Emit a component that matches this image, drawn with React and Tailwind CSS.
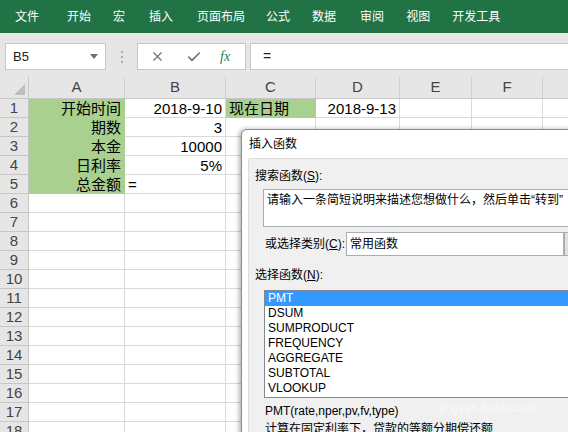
import React from "react";
import { X, Check } from "lucide-react";

const FONT = { fontFamily: '"Liberation Sans", "Noto Sans CJK SC", sans-serif' };

const tabs = [
  ["文件", "ml-[15px]"],
  ["开始", "ml-[28px]"],
  ["宏", "ml-[22px]"],
  ["插入", "ml-[24px]"],
  ["页面布局", "ml-[24px]"],
  ["公式", "ml-[21px]"],
  ["数据", "ml-[22px]"],
  ["审阅", "ml-[24px]"],
  ["视图", "ml-[22px]"],
  ["开发工具", "ml-[22px]"],
];

const colW = ["w-[96px]", "w-[101px]", "w-[90px]", "w-[84px]", "w-[72px]", "w-[71px]", "w-[90px]"];
const letters = ["A", "B", "C", "D", "E", "F", ""];

const data = {
  1: [
    { t: "开始时间", g: true, a: "r" },
    { t: "2018-9-10", a: "r" },
    { t: "现在日期", g: true, a: "l" },
    { t: "2018-9-13", a: "r" },
  ],
  2: [{ t: "期数", g: true, a: "r" }, { t: "3", a: "r" }],
  3: [{ t: "本金", g: true, a: "r" }, { t: "10000", a: "r" }],
  4: [{ t: "日利率", g: true, a: "r" }, { t: "5%", a: "r" }],
  5: [{ t: "总金额", g: true, a: "r" }, { t: "=", a: "l" }],
};

function Cell({ w, c }) {
  const green = c && c.g;
  return (
    <div
      className={
        w +
        " h-[19px] shrink-0 flex items-center border-r border-b " +
        (green ? "bg-[#a9d08e] border-[#a9d08e] " : "bg-white border-[#d9d9d9] ") +
        (c && c.a === "r" ? "justify-end pr-[3px]" : "justify-start pl-[3px]")
      }
    >
      {c ? <span className="text-[15px] leading-none text-black whitespace-nowrap">{c.t}</span> : null}
    </div>
  );
}

function Mn({ pre, k, post }) {
  return (
    <span>
      {pre}(<span className="underline">{k}</span>){post}
    </span>
  );
}

export default function App() {
  const rows = [];
  for (let r = 1; r <= 18; r++) rows.push(r);
  return (
    <div className="relative w-[568px] h-[432px] overflow-hidden bg-[#e6e6e6]" style={FONT}>
      {/* ribbon */}
      <div className="h-[33px] bg-[#217346] flex items-center">
        {tabs.map(([t, m]) => (
          <span key={t} className={m + " text-white text-[12px] leading-none whitespace-nowrap"}>
            {t}
          </span>
        ))}
      </div>

      {/* formula bar */}
      <div className="h-[44px] pt-[10px] flex items-start">
        <div className="ml-[5px] w-[101px] h-[27px] bg-white border border-[#c6c6c6] flex items-center justify-between pl-[7px] pr-[7px]">
          <span className="text-[13px] text-[#222]">B5</span>
          <svg width="8" height="5" viewBox="0 0 8 5">
            <path d="M0 0 L8 0 L4 5 Z" fill="#707070" />
          </svg>
        </div>
        <div className="ml-[15px] w-[2px] h-[27px] flex flex-col items-center justify-center gap-[3px]">
          <div className="w-[2px] h-[2px] bg-[#a8a8a8]" />
          <div className="w-[2px] h-[2px] bg-[#a8a8a8]" />
          <div className="w-[2px] h-[2px] bg-[#a8a8a8]" />
        </div>
        <div className="ml-[14px] w-[109px] h-[27px] bg-white border border-[#c6c6c6] flex items-center">
          <X size={15} strokeWidth={1.8} color="#6e6e6e" className="ml-[12px]" />
          <Check size={16} strokeWidth={2.4} color="#6e6e6e" className="ml-[21px]" />
          <span
            className="ml-[18px] text-[14px] italic text-[#2a7d4f]"
            style={{ fontFamily: '"Liberation Serif", serif' }}
          >
            fx
          </span>
        </div>
        <div className="ml-[4px] flex-1 h-[27px] bg-white border border-[#c6c6c6] border-r-0 flex items-center pl-[12px]">
          <span className="text-[14px] text-[#222]">=</span>
        </div>
      </div>

      {/* column header */}
      <div className="flex h-[22px] bg-[#e6e6e6] border-b border-[#c6c6c6]">
        <div className="w-[29px] shrink-0 h-full border-r border-[#c6c6c6] flex items-end justify-end pr-[3px] pb-[3px]">
          <svg width="11" height="11" viewBox="0 0 11 11">
            <path d="M11 0 L11 11 L0 11 Z" fill="#bdbdbd" />
          </svg>
        </div>
        {letters.map((l, i) => (
          <div
            key={i}
            className={colW[i] + " shrink-0 h-full flex items-center justify-center border-r border-[#cfcfcf] text-[15px] text-[#444]"}
          >
            {l}
          </div>
        ))}
      </div>

      {/* rows */}
      {rows.map((r) => (
        <div key={r} className="flex">
          <div className="w-[29px] shrink-0 h-[19px] bg-[#e6e6e6] border-r border-b border-[#c6c6c6] flex items-center justify-center text-[15px] text-[#444]">
            {r}
          </div>
          {colW.map((w, i) => (
            <Cell key={i} w={w} c={data[r] ? data[r][i] : null} />
          ))}
        </div>
      ))}

      {/* dialog */}
      <div className="absolute left-[241px] top-[129px] w-[400px] h-[320px] bg-white border border-[#8c8c8c] rounded-tl-[6px] shadow-[-2px_0_4px_rgba(0,0,0,0.3)]">
        <div className="h-[28px] flex items-center pl-[7px] text-[12px] text-black">插入函数</div>
        <div className="ml-[6px] h-full bg-[#f0f0f0] border-l border-t border-[#dcdcdc] rounded-tl-[3px] text-[12px] text-black">
          <div className="pt-[9px] pl-[6px] leading-[16px]">
            <Mn pre="搜索函数" k="S" post=":" />
          </div>
          <div className="mt-[5px] ml-[14px] h-[38px] bg-white border border-[#abadb3] border-r-0 pl-[3px] pt-[2px] leading-[16px] whitespace-nowrap">
            请输入一条简短说明来描述您想做什么，然后单击“转到”
          </div>
          <div className="mt-[5px] flex items-center h-[24px]">
            <div className="ml-[16px] w-[81px] leading-[16px] whitespace-nowrap">
              <Mn pre="或选择类别" k="C" post=":" />
            </div>
            <div className="w-[218px] h-[24px] bg-white border border-[#abadb3] flex items-center pl-[3px]">
              常用函数
            </div>
            <div className="w-[20px] h-[24px] bg-[#e1e1e1] border border-[#adadad]" />
          </div>
          <div className="mt-[11px] pl-[6px] leading-[16px]">
            <Mn pre="选择函数" k="N" post=":" />
          </div>
          <div className="mt-[7px] ml-[15px] h-[108px] bg-white border border-[#828790] border-r-0 leading-[15px]">
            <div className="h-[15px] bg-[#3399ff] text-white pl-[3px]">PMT</div>
            {["DSUM", "SUMPRODUCT", "FREQUENCY", "AGGREGATE", "SUBTOTAL", "VLOOKUP"].map((f) => (
              <div key={f} className="h-[15px] pl-[3px]">
                {f}
              </div>
            ))}
          </div>
          <div className="mt-[5px] pl-[16px] leading-[16px]">PMT(rate,nper,pv,fv,type)</div>
          <div className="mt-[2px] pl-[16px] leading-[16px]">计算在固定利率下，贷款的等额分期偿还额</div>
        </div>
      </div>

      {/* watermark */}
      <div className="absolute left-[436px] top-[366px] flex items-center text-[26px] font-bold text-white/70 leading-none pointer-events-none">
        <span>Bai</span>
        <span className="ml-[2px]">du</span>
        <span className="ml-[2px] text-[22px]">经验</span>
      </div>
      <div className="absolute left-[440px] top-[402px] text-[12px] text-white/60 leading-none pointer-events-none">
        jingyan.baidu.com
      </div>
    </div>
  );
}
